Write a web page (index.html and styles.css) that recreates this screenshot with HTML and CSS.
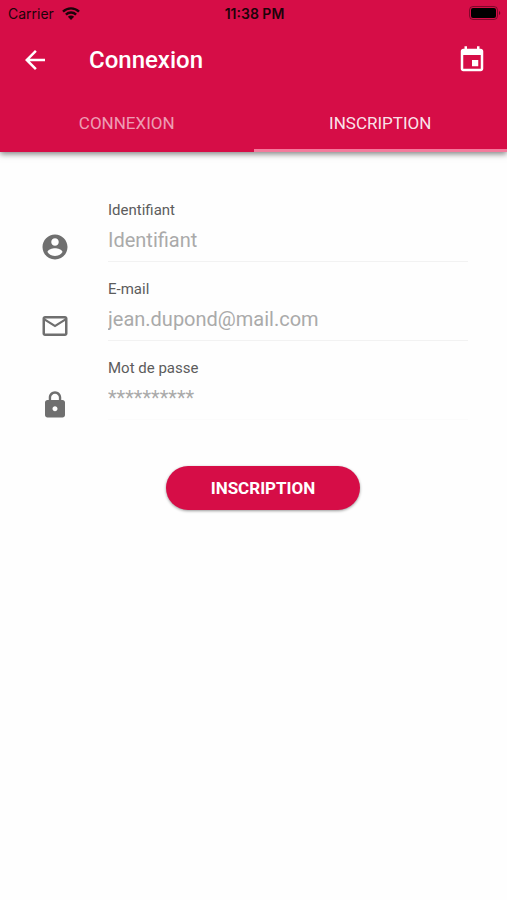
FILE: index.html
```html
<!DOCTYPE html>
<html lang="fr">
<head>
<meta charset="utf-8">
<meta name="viewport" content="width=device-width, initial-scale=1">
<title>Connexion</title>
<link rel="stylesheet" href="styles.css">
</head>
<body>
<header class="header">
  <div class="status">
    <div class="carrier">
      <span>Carrier</span>
      <svg class="wifi" viewBox="0 0 18 13" aria-hidden="true">
        <path d="M1 4.6a11.5 11.5 0 0 1 16 0M3.9 7.6a7.3 7.3 0 0 1 10.2 0" fill="none" stroke="currentColor" stroke-width="2.4"/>
        <path d="M9 13L5.9 9.8a4.4 4.4 0 0 1 6.2 0z" fill="currentColor"/>
      </svg>
    </div>
    <span class="clock">11:38 PM</span>
    <svg class="battery" viewBox="0 0 32 14" aria-hidden="true">
      <rect x="0.5" y="0.5" width="28" height="13" rx="3.5" fill="none" stroke="currentColor" opacity="0.4"/>
      <rect x="2" y="2" width="25" height="10" rx="2" fill="currentColor"/>
      <path d="M30 5v4a2.2 2.2 0 0 0 0-4z" fill="currentColor" opacity="0.5"/>
    </svg>
  </div>
  <div class="toolbar">
    <button class="icon-button" type="button" aria-label="Retour">
      <svg class="icon" viewBox="0 0 24 24"><path d="M20 11H7.83l5.59-5.59L12 4l-8 8 8 8 1.41-1.41L7.83 13H20v-2z"/></svg>
    </button>
    <h1 class="title">Connexion</h1>
    <button class="icon-button" type="button" aria-label="Agenda">
      <svg class="icon" viewBox="0 0 24 24"><path d="M17 12h-5v5h5v-5zM16 1v2H8V1H6v2H5c-1.11 0-1.99.9-1.99 2L3 19c0 1.1.89 2 2 2h14c1.1 0 2-.9 2-2V5c0-1.100-.9-2-2-2h-1V1h-2zm3 18H5V8h14v11z"/></svg>
    </button>
  </div>
  <nav class="tabs">
    <a class="tab" href="#connexion">CONNEXION</a>
    <a class="tab tab-active" href="#inscription" aria-current="page">INSCRIPTION</a>
  </nav>
</header>
<main>
  <form class="form">
    <div class="row">
      <svg class="icon row-icon" viewBox="0 0 24 24" aria-hidden="true"><path d="M12 2C6.480 2 2 6.480 2 12s4.480 10 10 10 10-4.480 10-10S17.520 2 12 2zm0 3c1.660 0 3 1.340 3 3s-1.340 3-3 3-3-1.340-3-3 1.340-3 3-3zm0 14.200c-2.500 0-4.710-1.280-6-3.220.030-1.990 4-3.080 6-3.080 1.990 0 5.970 1.090 6 3.080-1.290 1.940-3.500 3.220-6 3.220z"/></svg>
      <div class="field">
        <label class="label" for="login">Identifiant</label>
        <input class="input" id="login" type="text" placeholder="Identifiant">
      </div>
    </div>
    <div class="row">
      <svg class="icon row-icon" viewBox="0 0 24 24" aria-hidden="true"><path d="M20 4H4c-1.100 0-1.990.9-1.990 2L2 18c0 1.100.9 2 2 2h16c1.100 0 2-.9 2-2V6c0-1.100-.9-2-2-2zm0 14H4V8l8 5 8-5v10zm-8-7L4 6h16l-8 5z"/></svg>
      <div class="field">
        <label class="label" for="email">E-mail</label>
        <input class="input" id="email" type="email" placeholder="jean.dupond@mail.com">
      </div>
    </div>
    <div class="row">
      <svg class="icon row-icon" viewBox="0 0 24 24" aria-hidden="true"><path d="M18 8h-1V6c0-2.760-2.240-5-5-5S7 3.240 7 6v2H6c-1.100 0-2 .9-2 2v10c0 1.100.9 2 2 2h12c1.100 0 2-.9 2-2V10c0-1.100-.9-2-2-2zm-6 9c-1.100 0-2-.9-2-2s.9-2 2-2 2 .9 2 2-.9 2-2 2zm3.100-9H8.900V6c0-1.710 1.390-3.100 3.100-3.100s3.100 1.390 3.100 3.100v2z"/></svg>
      <div class="field field-last">
        <label class="label" for="password">Mot de passe</label>
        <input class="input" id="password" type="password" placeholder="**********">
      </div>
    </div>
    <button class="submit" type="submit">INSCRIPTION</button>
  </form>
</main>
</body>
</html>
```
FILE: styles.css
```css
* {
  box-sizing: border-box;
}

body {
  margin: 0;
  background: #fefefe;
  font-family: Roboto, "Liberation Sans", sans-serif;
}

.header {
  background: #d60d47;
  color: #fff;
  box-shadow: 0 2px 6px rgba(0, 0, 0, 0.5);
}

.status {
  display: grid;
  grid-template-columns: 1fr auto 1fr;
  align-items: center;
  height: 26px;
  padding: 0 6px 0 8px;
  color: #1c0309;
  font-family: Inter, "Liberation Sans", sans-serif;
  font-size: 14px;
}

.carrier {
  display: flex;
  align-items: center;
  gap: 8px;
}

.wifi {
  width: 18px;
  height: 13px;
}

.clock {
  font-weight: 600;
}

.battery {
  justify-self: end;
  width: 32px;
  height: 14px;
  color: #000;
}

.toolbar {
  display: flex;
  align-items: center;
  height: 68px;
  padding: 0 20px;
}

.icon {
  display: block;
  width: 30px;
  height: 30px;
  fill: currentColor;
}

.icon-button {
  padding: 0;
  border: 0;
  background: none;
  color: inherit;
}

.title {
  flex: 1;
  margin: 0 0 0 39px;
  font-size: 24px;
  font-weight: 500;
}

.tabs {
  display: grid;
  grid-template-columns: 1fr 1fr;
}

.tab {
  height: 58px;
  border-bottom: 3px solid transparent;
  color: rgba(255, 255, 255, 0.6);
  font-size: 17px;
  line-height: 58px;
  text-align: center;
  text-decoration: none;
}

.tab-active {
  border-bottom-color: #f47a9c;
  color: rgba(255, 255, 255, 0.9);
}

.form {
  display: flex;
  flex-direction: column;
  padding: 31px 39px 31px 40px;
}

.row {
  display: flex;
  align-items: flex-end;
  gap: 38px;
}

.row-icon {
  color: #6f6f6f;
}

.field {
  flex: 1;
  display: flex;
  flex-direction: column;
  padding-top: 17px;
  border-bottom: 1px solid #f2f2f2;
}

.field-last {
  border-bottom-color: #fbfbfb;
}

.label {
  color: #5c5c5c;
  font-size: 15px;
  line-height: 20px;
}

.input {
  width: 100%;
  height: 41px;
  padding: 0 0 2px;
  border: 0;
  outline: 0;
  background: none;
  color: #333;
  font-family: inherit;
  font-size: 20px;
}

.input::placeholder {
  color: #aaa;
  opacity: 1;
}

.submit {
  align-self: center;
  width: 194px;
  height: 44px;
  margin: 46px 0 0 18px;
  padding: 0;
  border: 0;
  border-radius: 22px;
  background: #d60d47;
  color: #fff;
  box-shadow: 0 1px 3px rgba(0, 0, 0, 0.4);
  font-family: inherit;
  font-size: 17px;
  font-weight: 700;
}
```
